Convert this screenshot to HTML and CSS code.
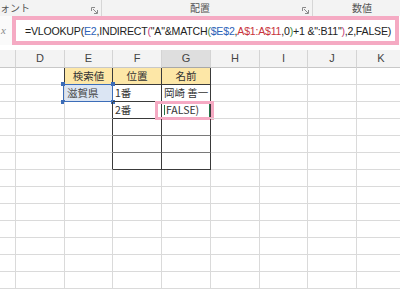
FILE: index.html
```html
<!DOCTYPE html>
<html lang="ja">
<head>
<meta charset="utf-8">
<link rel="stylesheet" href="styles.css">
</head>
<body>
<div class="ribbon">
  <div class="grp g1"><span class="glabel">ォント</span><svg class="launch" width="7" height="7" viewBox="0 0 7 7"><path d="M0.5 4V0.5H4M2 2L6 6M6.5 3V6.5H3" fill="none" stroke="#8a8a8a" stroke-width="1"/></svg></div>
  <div class="grp g2"><span class="glabel">配置</span><svg class="launch" width="7" height="7" viewBox="0 0 7 7"><path d="M0.5 4V0.5H4M2 2L6 6M6.5 3V6.5H3" fill="none" stroke="#8a8a8a" stroke-width="1"/></svg></div>
  <div class="grp g3"><span class="glabel">数値</span></div>
</div>
<div class="fbar">
  <div class="fx">x</div>
  <div class="fbox"><span class="ftext">=VLOOKUP(<span class="cb">E2</span>,INDIRECT<span class="cp">(</span>"A"&amp;MATCH<span class="cg">(</span><span class="cb">$E$2</span>,<span class="cr">A$1:A$11</span>,0<span class="cg">)</span>+1 &amp;":B11"<span class="cp">)</span>,2,FALSE)</span></div>
</div>
<div class="sheet">
  <div class="row hdr"><div class="h"></div><div class="h">D</div><div class="h">E</div><div class="h">F</div><div class="h sel">G</div><div class="h">H</div><div class="h">I</div><div class="h">J</div><div class="h">K</div></div>
  <div class="row"><div class="c"></div><div class="c r"></div><div class="c r b y ctr">検索値</div><div class="c r b y ctr">位置</div><div class="c r b y ctr">名前</div><div class="c"></div><div class="c"></div><div class="c"></div><div class="c"></div></div>
  <div class="row"><div class="c"></div><div class="c"></div><div class="c e2">滋賀県<span class="selbox"><i class="hd tl"></i><i class="hd tr"></i><i class="hd bl"></i><i class="hd br"></i></span></div><div class="c r b">1番</div><div class="c r b">岡崎 善一</div><div class="c"></div><div class="c"></div><div class="c"></div><div class="c"></div></div>
  <div class="row"><div class="c"></div><div class="c"></div><div class="c r"></div><div class="c r b">2番</div><div class="c r b act"><span class="cursor"></span>FALSE)<span class="pink"></span></div><div class="c"></div><div class="c"></div><div class="c"></div><div class="c"></div></div>
  <div class="row"><div class="c"></div><div class="c"></div><div class="c r"></div><div class="c r b m"></div><div class="c r b m"></div><div class="c"></div><div class="c"></div><div class="c"></div><div class="c"></div></div>
  <div class="row"><div class="c"></div><div class="c"></div><div class="c r"></div><div class="c r b m"></div><div class="c r b m"></div><div class="c"></div><div class="c"></div><div class="c"></div><div class="c"></div></div>
  <div class="row"><div class="c"></div><div class="c"></div><div class="c r"></div><div class="c r b"></div><div class="c r b"></div><div class="c"></div><div class="c"></div><div class="c"></div><div class="c"></div></div>
  <div class="row"><div class="c"></div><div class="c"></div><div class="c"></div><div class="c"></div><div class="c"></div><div class="c"></div><div class="c"></div><div class="c"></div><div class="c"></div></div>
  <div class="row"><div class="c"></div><div class="c"></div><div class="c"></div><div class="c"></div><div class="c"></div><div class="c"></div><div class="c"></div><div class="c"></div><div class="c"></div></div>
  <div class="row"><div class="c"></div><div class="c"></div><div class="c"></div><div class="c"></div><div class="c"></div><div class="c"></div><div class="c"></div><div class="c"></div><div class="c"></div></div>
  <div class="row"><div class="c"></div><div class="c"></div><div class="c"></div><div class="c"></div><div class="c"></div><div class="c"></div><div class="c"></div><div class="c"></div><div class="c"></div></div>
  <div class="row"><div class="c"></div><div class="c"></div><div class="c"></div><div class="c"></div><div class="c"></div><div class="c"></div><div class="c"></div><div class="c"></div><div class="c"></div></div>
  <div class="row"><div class="c"></div><div class="c"></div><div class="c"></div><div class="c"></div><div class="c"></div><div class="c"></div><div class="c"></div><div class="c"></div><div class="c"></div></div>
  <div class="row"><div class="c"></div><div class="c"></div><div class="c"></div><div class="c"></div><div class="c"></div><div class="c"></div><div class="c"></div><div class="c"></div><div class="c"></div></div>
</div>
</body>
</html>
```
FILE: styles.css
```css
html, body {
  margin: 0;
  padding: 0;
  background: #ffffff;
}
body {
  width: 400px;
  height: 293px;
  overflow: hidden;
  font-family: "Noto Sans CJK JP", "Noto Sans", sans-serif;
  color: #333;
}
.ribbon {
  display: flex;
  height: 16px;
  background: #f3f3f3;
  overflow: hidden;
}
.grp {
  flex: none;
  display: flex;
  align-items: center;
  box-sizing: border-box;
  border-right: 1px solid #d6d6d6;
  height: 16px;
}
.g1 { width: 102px; }
.g2 { width: 211px; }
.g3 { width: 87px; border-right: none; }
.glabel {
  flex: 1;
  font-size: 10px;
  line-height: 16px;
  color: #555;
  text-align: left;
  white-space: nowrap;
}
.g2 .glabel { padding-left: 88px; }
.g3 .glabel { padding-left: 39px; }
.launch { flex: none; margin: 5px 3px 0 0; }
.fbar {
  display: flex;
  height: 34px;
  padding-bottom: 5px;
  box-sizing: border-box;
  background: #fff;
}
.fx {
  width: 12px;
  flex: none;
  overflow: hidden;
  font-family: "Liberation Serif", serif;
  font-style: italic;
  font-size: 11px;
  color: #888;
  line-height: 29px;
  padding-left: 1px;
  box-sizing: border-box;
  background: #fafafa;
}
.fbox {
  flex: 1;
  margin-right: 1px;
  border: 4px solid #f5aac3;
  display: flex;
  align-items: center;
  padding-left: 9px;
  overflow: hidden;
}
.ftext {
  font-family: "Liberation Sans", sans-serif;
  font-size: 10.6px;
  letter-spacing: -0.22px;
  color: #222;
  white-space: nowrap;
}
.cb { color: #2e63b8; }
.cr { color: #c8343c; }
.cp { color: #c7437c; }
.cg { color: #3d8a3d; }
.sheet { display: flex; flex-direction: column; }
.row {
  display: grid;
  grid-template-columns: 16px 49px 48px 49px 49px 49px 48px 49px 49px;
  height: 17px;
}
.row.hdr { height: 18px; background: #f3f3f3; }
.h {
  box-sizing: border-box;
  border-right: 1px solid #d4d4d4;
  border-bottom: 1px solid #c8c8c8;
  text-align: center;
  font-family: "Liberation Sans", sans-serif;
  font-size: 11px;
  line-height: 17px;
  color: #444;
}
.h.sel { background: #dedede; border-bottom-color: #a8a8a8; }
.c {
  position: relative;
  box-sizing: border-box;
  border-right: 1px solid #dadada;
  border-bottom: 1px solid #dadada;
  font-size: 10.5px;
  line-height: 16px;
  padding-left: 2px;
  white-space: nowrap;
  color: #333;
}
.c.r { border-right-color: #3a3a3a; }
.c.b { border-bottom-color: #3a3a3a; }
.c.m { border-bottom-color: #7a7a7a; }
.y { background: #fde7a7; }
.ctr { text-align: center; padding-left: 0; }
.e2 { background: #dbe5f3; color: #444; }
.selbox {
  position: absolute;
  left: -2px;
  top: -1px;
  right: -1px;
  bottom: -1px;
  border: 1.5px solid #3c6db8;
}
.hd {
  position: absolute;
  width: 4px;
  height: 4px;
  background: #3c6db8;
}
.tl { left: -3px; top: -3px; }
.tr { right: -3px; top: -3px; }
.bl { left: -3px; bottom: -3px; }
.br { right: -3px; bottom: -3px; }
.act { box-shadow: inset -1px 0 0 #217346; }
.cursor {
  display: inline-block;
  width: 1px;
  height: 10px;
  background: #217346;
  vertical-align: -1px;
  margin-right: 1px;
}
.pink {
  position: absolute;
  left: -7px;
  top: -1px;
  right: -4px;
  bottom: -2px;
  border: 3px solid #f5aac3;
}
```
